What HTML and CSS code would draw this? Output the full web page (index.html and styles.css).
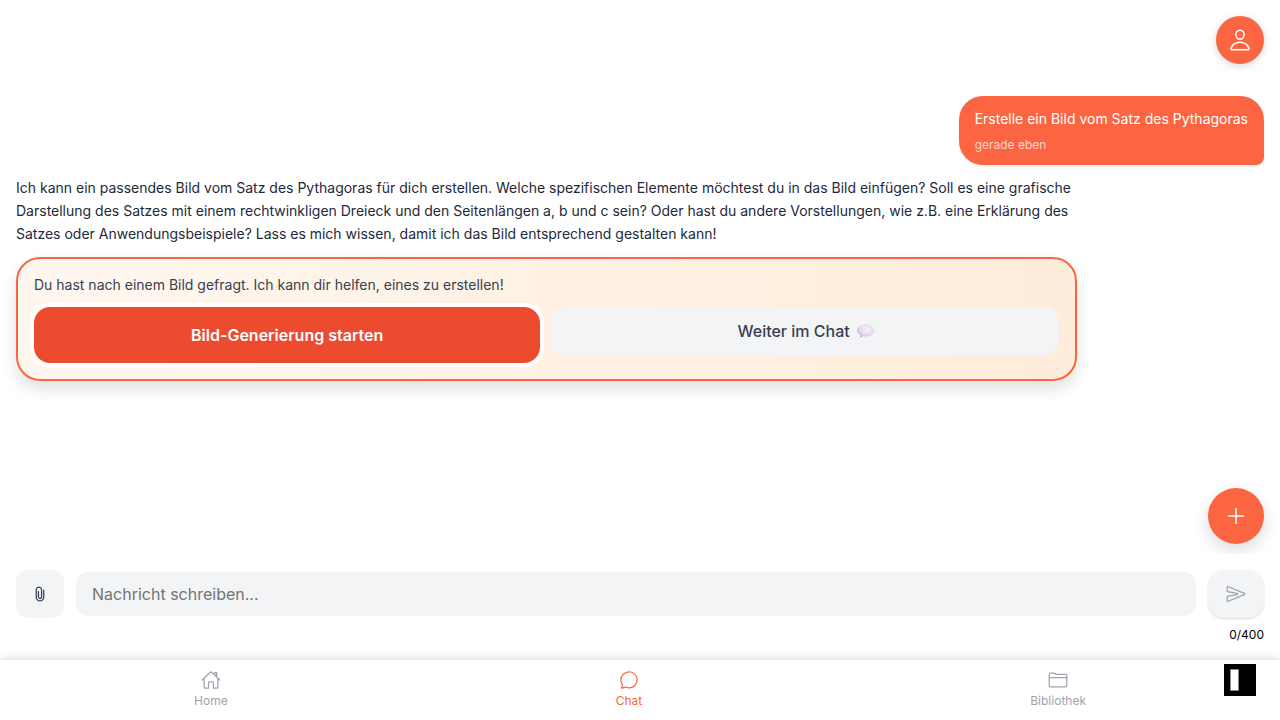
FILE: index.html
```html
<!DOCTYPE html>
<html lang="de">
<head>
<meta charset="utf-8">
<meta name="viewport" content="width=device-width, initial-scale=1">
<title>Chat</title>
<link rel="stylesheet" href="styles.css">
</head>
<body>
<div class="app">
  <header class="header">
    <button class="profile" type="button" aria-label="Profil">
      <svg class="icon icon-lg" viewBox="0 0 512 512"><path d="M344 144c-3.920 52.870-44 96-88 96s-84.150-43.120-88-96c-4-55 35-96 88-96s92 42 88 96z"/><path d="M256 304c-87 0-175.300 48-191.640 138.600C62.390 453.520 68.570 464 80 464h352c11.440 0 17.620-10.480 15.650-21.400C431.300 352 343 304 256 304z"/></svg>
    </button>
  </header>
  <main class="messages">
    <article class="bubble">
      <p class="bubble-text">Erstelle ein Bild vom Satz des Pythagoras</p>
      <time class="bubble-time">gerade eben</time>
    </article>
    <article class="reply">
      <p class="reply-text">Ich kann ein passendes Bild vom Satz des Pythagoras für dich erstellen. Welche spezifischen Elemente möchtest du in das Bild einfügen? Soll es eine grafische Darstellung des Satzes mit einem rechtwinkligen Dreieck und den Seitenlängen a, b und c sein? Oder hast du andere Vorstellungen, wie z.B. eine Erklärung des Satzes oder Anwendungsbeispiele? Lass es mich wissen, damit ich das Bild entsprechend gestalten kann!</p>
      <section class="card">
        <p class="card-text">Du hast nach einem Bild gefragt. Ich kann dir helfen, eines zu erstellen!</p>
        <div class="actions">
          <button class="action primary" type="button">Bild-Generierung starten</button>
          <button class="action secondary" type="button">Weiter im Chat
            <svg class="speech" viewBox="0 0 16 16" aria-hidden="true"><defs><radialGradient id="speech-fill" cx="0.6" cy="0.35" r="0.7"><stop offset="0" stop-color="#f8f0f8"/><stop offset="0.6" stop-color="#e7daee"/><stop offset="1" stop-color="#b9a5d8"/></radialGradient></defs><path fill="url(#speech-fill)" d="M8.500 1.500C12.900 1.500 16 3.800 16 7S12.900 12.600 8.500 12.600C7.500 12.600 6.600 12.500 5.800 12.200L3 14L3.100 11.200C1.200 10.200 0 8.800 0 7C0 3.900 4 1.500 8.500 1.500Z"/></svg>
          </button>
        </div>
      </section>
    </article>
  </main>
  <button class="fab" type="button" aria-label="Neuer Chat"><svg class="icon icon-lg" viewBox="0 0 512 512"><path d="M256 96v320M416 256H96"/></svg></button>
  <form class="composer">
    <div class="composer-row">
      <button class="tool" type="button" aria-label="Datei anhängen"><svg class="icon icon-md" viewBox="0 0 512 512"><path d="M216.080 192v143.850a40.080 40.080 0 0080.150 0l.13-188.550a67.940 67.940 0 10-135.870 0v189.820a95.510 95.510 0 10191 0V159.740"/></svg></button>
      <input class="field" type="text" maxlength="400" aria-label="Nachricht" placeholder="Nachricht schreiben...">
      <button class="tool send" type="button" aria-label="Senden"><svg class="icon icon-md" viewBox="0 0 512 512"><path d="M470.300 271.150L43.160 447.310a7.830 7.830 0 01-11.160-7V327a8 8 0 016.510-7.860l247.620-47c17.360-3.290 17.360-28.150 0-31.440l-247.630-47a8 8 0 01-6.500-7.850V72.590c0-5.740 5.880-10.260 11.160-8L470.300 241.760a16 16 0 010 29.390z"/></svg></button>
    </div>
    <output class="counter">0/400</output>
  </form>
  <nav class="tabs">
    <a class="tab" href="#home"><svg class="icon icon-md" viewBox="0 0 512 512"><path d="M80 212v236a16 16 0 0016 16h96V328a24 24 0 0124-24h80a24 24 0 0124 24v136h96a16 16 0 0016-16V212M480 256L266.890 52c-5-5.280-16.690-5.340-21.780 0L32 256M400 179V64h-48v69"/></svg><span>Home</span></a>
    <a class="tab active" href="#chat" aria-current="page"><svg class="icon icon-md" viewBox="0 0 512 512"><path d="M87.480 380c1.200-4.380-1.430-10.470-3.940-14.860a42.630 42.630 0 00-2.540-3.800 199.810 199.810 0 01-33-110C47.640 139.330 140.720 48 255.820 48 356.200 48 440 117.540 459.570 209.850a199 199 0 014.430 41.640c0 112.410-89.490 204.930-204.590 204.930-18.310 0-43-4.600-56.470-8.370s-26.920-8.770-30.390-10.110a31.140 31.140 0 00-11.130-2.070 30.700 30.700 0 00-12.080 2.430L81.500 462.780a15.920 15.920 0 01-4.660 1.220 9.610 9.610 0 01-9.580-9.740 15.850 15.850 0 01.6-3.290z"/></svg><span>Chat</span></a>
    <a class="tab" href="#bibliothek"><svg class="icon icon-md" viewBox="0 0 512 512"><path d="M440 432H72a40 40 0 01-40-40V120a40 40 0 0140-40h75.890a40 40 0 0122.190 6.720l27.840 18.560a40 40 0 0022.190 6.720H440a40 40 0 0140 40v240a40 40 0 01-40 40zM32 192h448"/></svg><span>Bibliothek</span></a>
  </nav>
  <button class="panel-toggle" type="button" aria-label="Seitenleiste"><svg class="panel-icon" viewBox="0 0 32 32"><path fill="#fff" stroke="#888" d="M6.500 5.500h8v21h-8z"/></svg></button>
</div>
</body>
</html>
```
FILE: styles.css
```css
*, *::before, *::after { box-sizing: border-box; }
body {
  margin: 0;
  background: #fff;
  color: #1e293b;
  font-family: Inter, "Liberation Sans", sans-serif;
}
p { margin: 0; }
button, input { border: 0; font: inherit; }
button { padding: 0; cursor: pointer; }
.app { position: relative; min-height: 100vh; display: flex; flex-direction: column; }
.icon { display: block; fill: none; stroke: currentColor; stroke-width: 32; stroke-linecap: round; stroke-linejoin: round; }
.icon-md { width: 20px; height: 20px; }
.icon-lg { width: 24px; height: 24px; }

.header { display: flex; justify-content: flex-end; padding: 16px; }
.profile, .fab { display: grid; place-items: center; border-radius: 50%; background: #fb6542; color: #fff; }
.profile { width: 48px; height: 48px; box-shadow: 0 2px 8px rgba(0, 0, 0, .15); }

.messages { flex: 1; display: flex; flex-direction: column; gap: 11px; padding: 16px; }
.bubble {
  align-self: flex-end;
  max-width: 85%;
  padding: 12px 16px;
  border-radius: 24px 24px 8px 24px;
  background: #fb6542;
  color: #fff;
  box-shadow: 0 1px 2px rgba(0, 0, 0, .1);
}
.bubble-text { font-size: 14px; line-height: 21px; }
.bubble-time { display: block; margin-top: 8px; font-size: 12px; line-height: 16px; opacity: .7; }
.reply { width: 85%; }
.reply-text { font-size: 14px; line-height: 23px; }
.card {
  margin-top: 12px;
  padding: 16px;
  border: 2px solid #fb6542;
  border-radius: 24px;
  background: linear-gradient(to right, #fff7ef, #feecda);
  box-shadow: 0 8px 16px rgba(0, 0, 0, .12);
}
.card-text { margin-bottom: 12px; color: #374151; font-size: 14px; line-height: 20px; }
.actions { display: flex; align-items: flex-start; gap: 12px; }
.action { flex: 1; height: 48px; border-radius: 16px; font-size: 16px; line-height: 24px; }
.primary { height: 56px; background: #ec4b30; color: #fff; font-weight: 600; box-shadow: 0 0 0 4px #fff; }
.secondary { display: flex; align-items: center; justify-content: center; gap: 7px; background: #f3f4f6; color: #374151; font-weight: 500; }
.speech { width: 17px; height: 17px; }

.fab { position: absolute; right: 16px; bottom: 176px; width: 56px; height: 56px; box-shadow: 0 6px 16px rgba(0, 0, 0, .15); }
.composer { position: relative; padding: 16px; background: #fff; }
.composer-row { display: flex; align-items: center; gap: 12px; }
.tool { display: grid; place-items: center; flex: none; width: 48px; height: 48px; border-radius: 12px; background: #f3f4f6; color: #334155; }
.send { width: 56px; border-radius: 16px; color: #9ca3af; box-shadow: 0 1px 2px rgba(0, 0, 0, .15); }
.field { flex: 1; min-width: 0; height: 44px; padding: 0 16px; border-radius: 12px; background: #f3f4f6; font-size: 16px; }
.field::placeholder { color: #757575; }
.counter { display: block; margin-top: 8px; color: #000; font-size: 12px; line-height: 18px; text-align: right; }

.tabs { position: relative; display: flex; height: 60px; background: #fff; box-shadow: 0 -2px 8px rgba(0, 0, 0, .12); }
.tab { flex: 1 1 auto; display: flex; flex-direction: column; align-items: center; padding-top: 10px; gap: 2px; color: #9ca3af; font-size: 12px; line-height: 18px; text-decoration: none; }
.active { color: #fb6542; }
.panel-toggle { position: absolute; right: 24px; bottom: 24px; width: 32px; height: 32px; background: #000; }
.panel-icon { display: block; width: 32px; height: 32px; }
```
